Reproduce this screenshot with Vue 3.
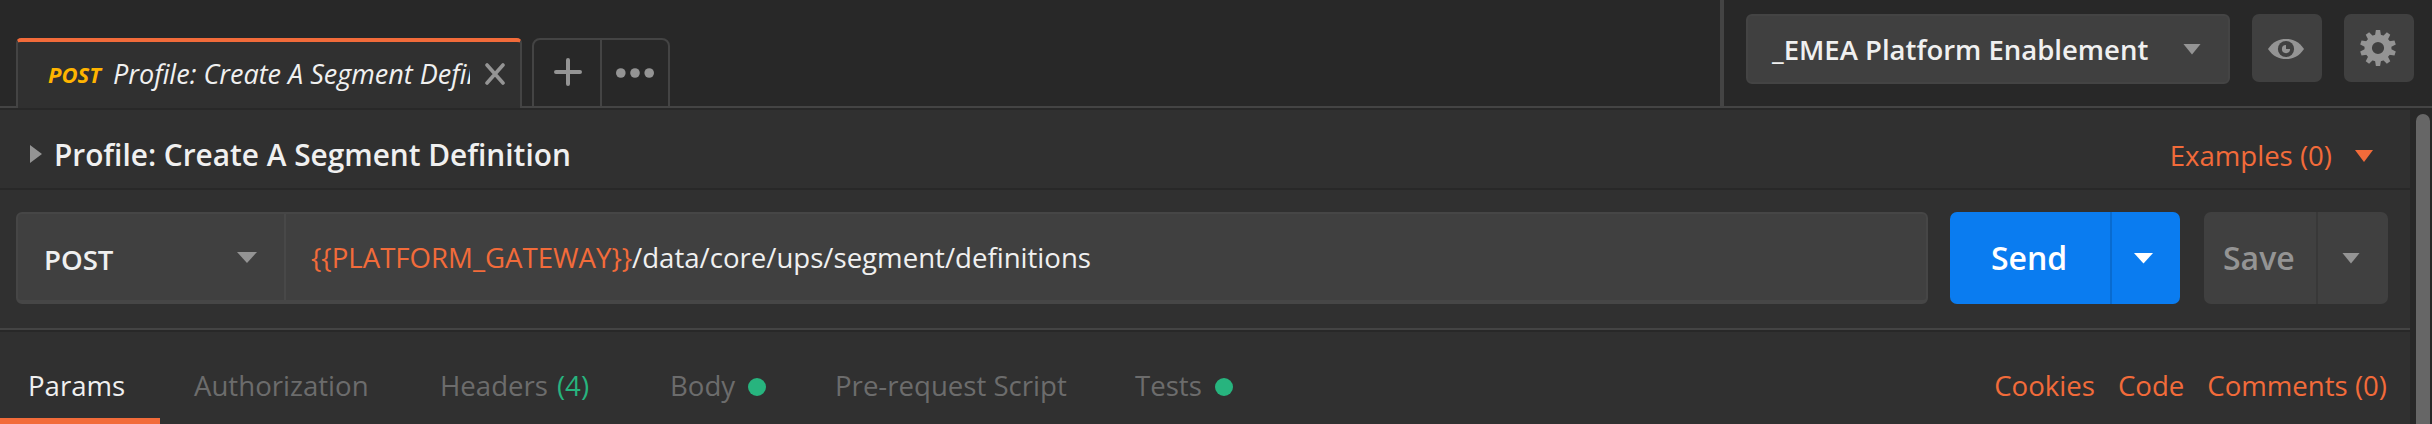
<script setup>
const tabs = [
  { id: 'params', label: 'Params', active: true },
  { id: 'auth', label: 'Authorization' },
  { id: 'headers', label: 'Headers', count: '(4)' },
  { id: 'body', label: 'Body', dot: true },
  { id: 'script', label: 'Pre-request Script' },
  { id: 'tests', label: 'Tests', dot: true }
]
const teeth = Array.from({ length: 10 }, (_, i) => i * 36)
</script>

<template>
  <div class="app">
    <header class="topbar">
      <div class="filetab">
        <span class="method">POST</span>
        <span class="name">Profile: Create A Segment Definition</span>
        <svg class="close" width="20" height="22" viewBox="0 0 20 22"><path d="M2 2 18 20M18 2 2 20" /></svg>
      </div>
      <div class="tools">
        <div class="tool plus">
          <svg width="28" height="28" viewBox="0 0 28 28"><path d="M14 2V26M2 14H26" /></svg>
        </div>
        <div class="tool more">
          <svg width="38" height="10" viewBox="0 0 38 10"><circle cx="4.8" cy="5" r="4.8" /><circle cx="19" cy="5" r="4.8" /><circle cx="33.2" cy="5" r="4.8" /></svg>
        </div>
      </div>
      <div class="env">
        <div class="select"><span class="envname">_EMEA Platform Enablement</span><i class="tri"></i></div>
        <div class="iconbtn">
          <svg width="36" height="22" viewBox="0 0 36 22">
            <path d="M0 11C5 3.500 11 1 18 1s13 2.500 18 10c-5 7.500-11 10-18 10S5 18.500 0 11Z" fill="#949494" />
            <circle cx="18" cy="11" r="8.100" fill="#404040" />
            <path d="M18 7a4.100 4.100 0 1 0 4.100 4.100H18Z" fill="#949494" />
          </svg>
        </div>
        <div class="iconbtn gear">
          <svg width="36" height="36" viewBox="-18 -18 36 36">
            <path v-for="a in teeth" :key="a" :transform="`rotate(${a})`" d="M-3.200-11-2.100-18H2.100L3.200-11Z" fill="#949494" />
            <circle r="9.800" fill="none" stroke="#949494" stroke-width="7.400" />
          </svg>
        </div>
      </div>
    </header>

    <div class="content">
      <main class="panel">
        <div class="titlebar">
          <i class="caret"></i>
          <span class="title">Profile: Create A Segment Definition</span>
          <span class="examples">Examples (0)</span><i class="tri orange"></i>
        </div>
        <div class="request">
          <div class="urlbox">
            <div class="verb"><span>POST</span><i class="tri"></i></div>
            <div class="url"><span class="var" v-text="'{{PLATFORM_GATEWAY}}'"></span><span>/data/core/ups/segment/definitions</span></div>
          </div>
          <div class="btn send"><span class="label">Send</span><span class="drop"><i class="tri"></i></span></div>
          <div class="btn save"><span class="label">Save</span><span class="drop"><i class="tri"></i></span></div>
        </div>
        <nav class="tabs">
          <div v-for="t in tabs" :key="t.id" class="tab" :class="[t.id, { active: t.active }]">
            <span>{{ t.label }}</span>
            <span v-if="t.count" class="count">{{ t.count }}</span>
            <i v-if="t.dot" class="dot"></i>
          </div>
          <div class="links"><span class="cookies">Cookies</span><span class="code">Code</span><span class="comments">Comments (0)</span></div>
        </nav>
      </main>
      <div class="scroll"><div class="thumb"></div></div>
    </div>
  </div>
</template>

<style>
body { background: #282828; overflow: hidden; }
</style>

<style scoped>
.app {
  width: 2432px; height: 424px; overflow: hidden; background: #282828;
  font-family: "Open Sans", "Noto Sans", sans-serif; font-size: 27.6px; color: #f0f0f0;
  white-space: nowrap; display: flex; flex-direction: column;
}
.app * { box-sizing: border-box; }
.topbar { height: 108px; flex: none; display: flex; align-items: flex-end; background: linear-gradient(#444, #444) bottom / 100% 2px no-repeat; }
.filetab {
  width: 506px; height: 70px; margin-left: 16px; padding: 0 14px 2px 30px; display: flex; align-items: center;
  background: #303030; border: 2px solid #444; border-top: 4px solid #f26b3a; border-bottom: 0; border-radius: 5px 5px 0 0;
  font-style: italic;
}
.method { width: 65px; flex: none; font-size: 22px; font-weight: 700; color: #ffb400; line-height: 30px; }
.name { width: 357px; flex: none; overflow: hidden; font-size: 27px; line-height: 40px; }
.close { margin-left: 15px; flex: none; }
.close path, .plus path { stroke: #949494; stroke-width: 4; stroke-linecap: round; fill: none; }
.close path { stroke-width: 3.6; }
.tools { margin-left: 10px; width: 138px; height: 70px; display: flex; border: 2px solid #444; border-radius: 8px 8px 0 0; }
.tool { display: flex; align-items: center; justify-content: center; }
.plus { width: 66px; padding: 0 0 2px 2px; }
.more { width: 68px; border-left: 2px solid #444; }
.more circle { fill: #949494; }
.tri { display: block; flex: none; width: 18px; height: 11px; background: #949494; clip-path: polygon(0 0, 100% 0, 50% 100%); }
.env { margin-left: auto; width: 712px; height: 106px; margin-bottom: 2px; border-left: 4px solid #444; display: flex; padding: 14px 0 0 22px; }
.select { width: 484px; height: 70px; border: 2px solid #444; border-radius: 6px; background: #404040; display: flex; align-items: center; justify-content: space-between; padding: 0 27px 0 24px; font-size: 27.5px; font-weight: 600; }
.iconbtn { width: 70px; height: 68px; margin-left: 22px; border-radius: 7px; background: #404040; display: flex; align-items: center; justify-content: center; padding: 2px 2px 0 0; }
.gear { padding-top: 0; }
.content { flex: 1; display: flex; padding-top: 2px; }
.panel { width: 2410px; background: #303030; }
.scroll { flex: 1; padding: 4px 2px 0 6px; display: flex; }
.thumb { width: 14px; border-radius: 7px 7px 0 0; background: #666; }
.titlebar { height: 80px; border-bottom: 2px solid #282828; display: flex; align-items: center; padding: 12px 37px 0 30px; }
.caret { width: 12px; height: 18px; background: #949494; clip-path: polygon(0 0, 100% 50%, 0 100%); margin-bottom: 2px; }
.title { margin-left: 10px; padding-left: 2px; font-size: 29.8px; line-height: 40px; font-weight: 600; }
.examples { margin-left: auto; margin-right: 23px; color: #f26b3a; }
.titlebar .orange { background: #f26b3a; margin-top: 2px; height: 12px; }
.request { height: 142px; padding: 22px 22px 0 16px; display: flex; border-bottom: 2px solid #282828; background: linear-gradient(#444, #444) bottom / 100% 2px no-repeat; }
.urlbox { width: 1912px; height: 92px; border: 2px solid #464646; border-bottom-width: 4px; border-radius: 6px; background: #404040; display: flex; }
.verb { width: 268px; border-right: 2px solid #484848; padding: 4px 27px 0 26px; display: flex; align-items: center; justify-content: space-between; font-weight: 600; }
.verb .tri { width: 20px; margin-bottom: 3px; }
.url { padding-left: 25px; display: flex; align-items: center; }
.var { color: #f26b3a; }
.btn { height: 92px; border-radius: 7px; display: flex; font-size: 32px; font-weight: 600; }
.send { width: 230px; margin-left: 22px; background: #0a7cf0; color: #fff; }
.save { width: 184px; margin-left: 24px; background: #404040; color: #949494; }
.label { width: 160px; padding-left: 41px; line-height: 92px; }
.save .label { width: 112px; padding-left: 19px; }
.drop { flex: 1; border-left: 2px solid #086bd0; display: flex; align-items: center; justify-content: center; }
.drop .tri { width: 20px; }
.send .tri { background: #fff; margin-right: 5px; }
.save .drop { border-color: #383838; }
.save .tri { width: 18px; margin-right: 4px; }
.tabs { height: 92px; display: flex; padding-right: 23px; line-height: 106px; }
.tab { height: 92px; flex: none; display: flex; color: #6c6c6c; }
.params { width: 160px; padding-left: 28px; border-bottom: 6px solid #f26b3a; }
.tab.active { color: #f0f0f0; }
.auth { width: 280px; padding-left: 34px; }
.headers { width: 230px; }
.body { width: 165px; }
.script { width: 300px; }
.count { margin-left: 9px; color: #27b47e; }
.dot { width: 18px; height: 18px; border-radius: 50%; background: #27b47e; margin: 46px 0 0 13px; }
.links { margin-left: auto; display: flex; color: #f26b3a; gap: 23px; }
</style>
